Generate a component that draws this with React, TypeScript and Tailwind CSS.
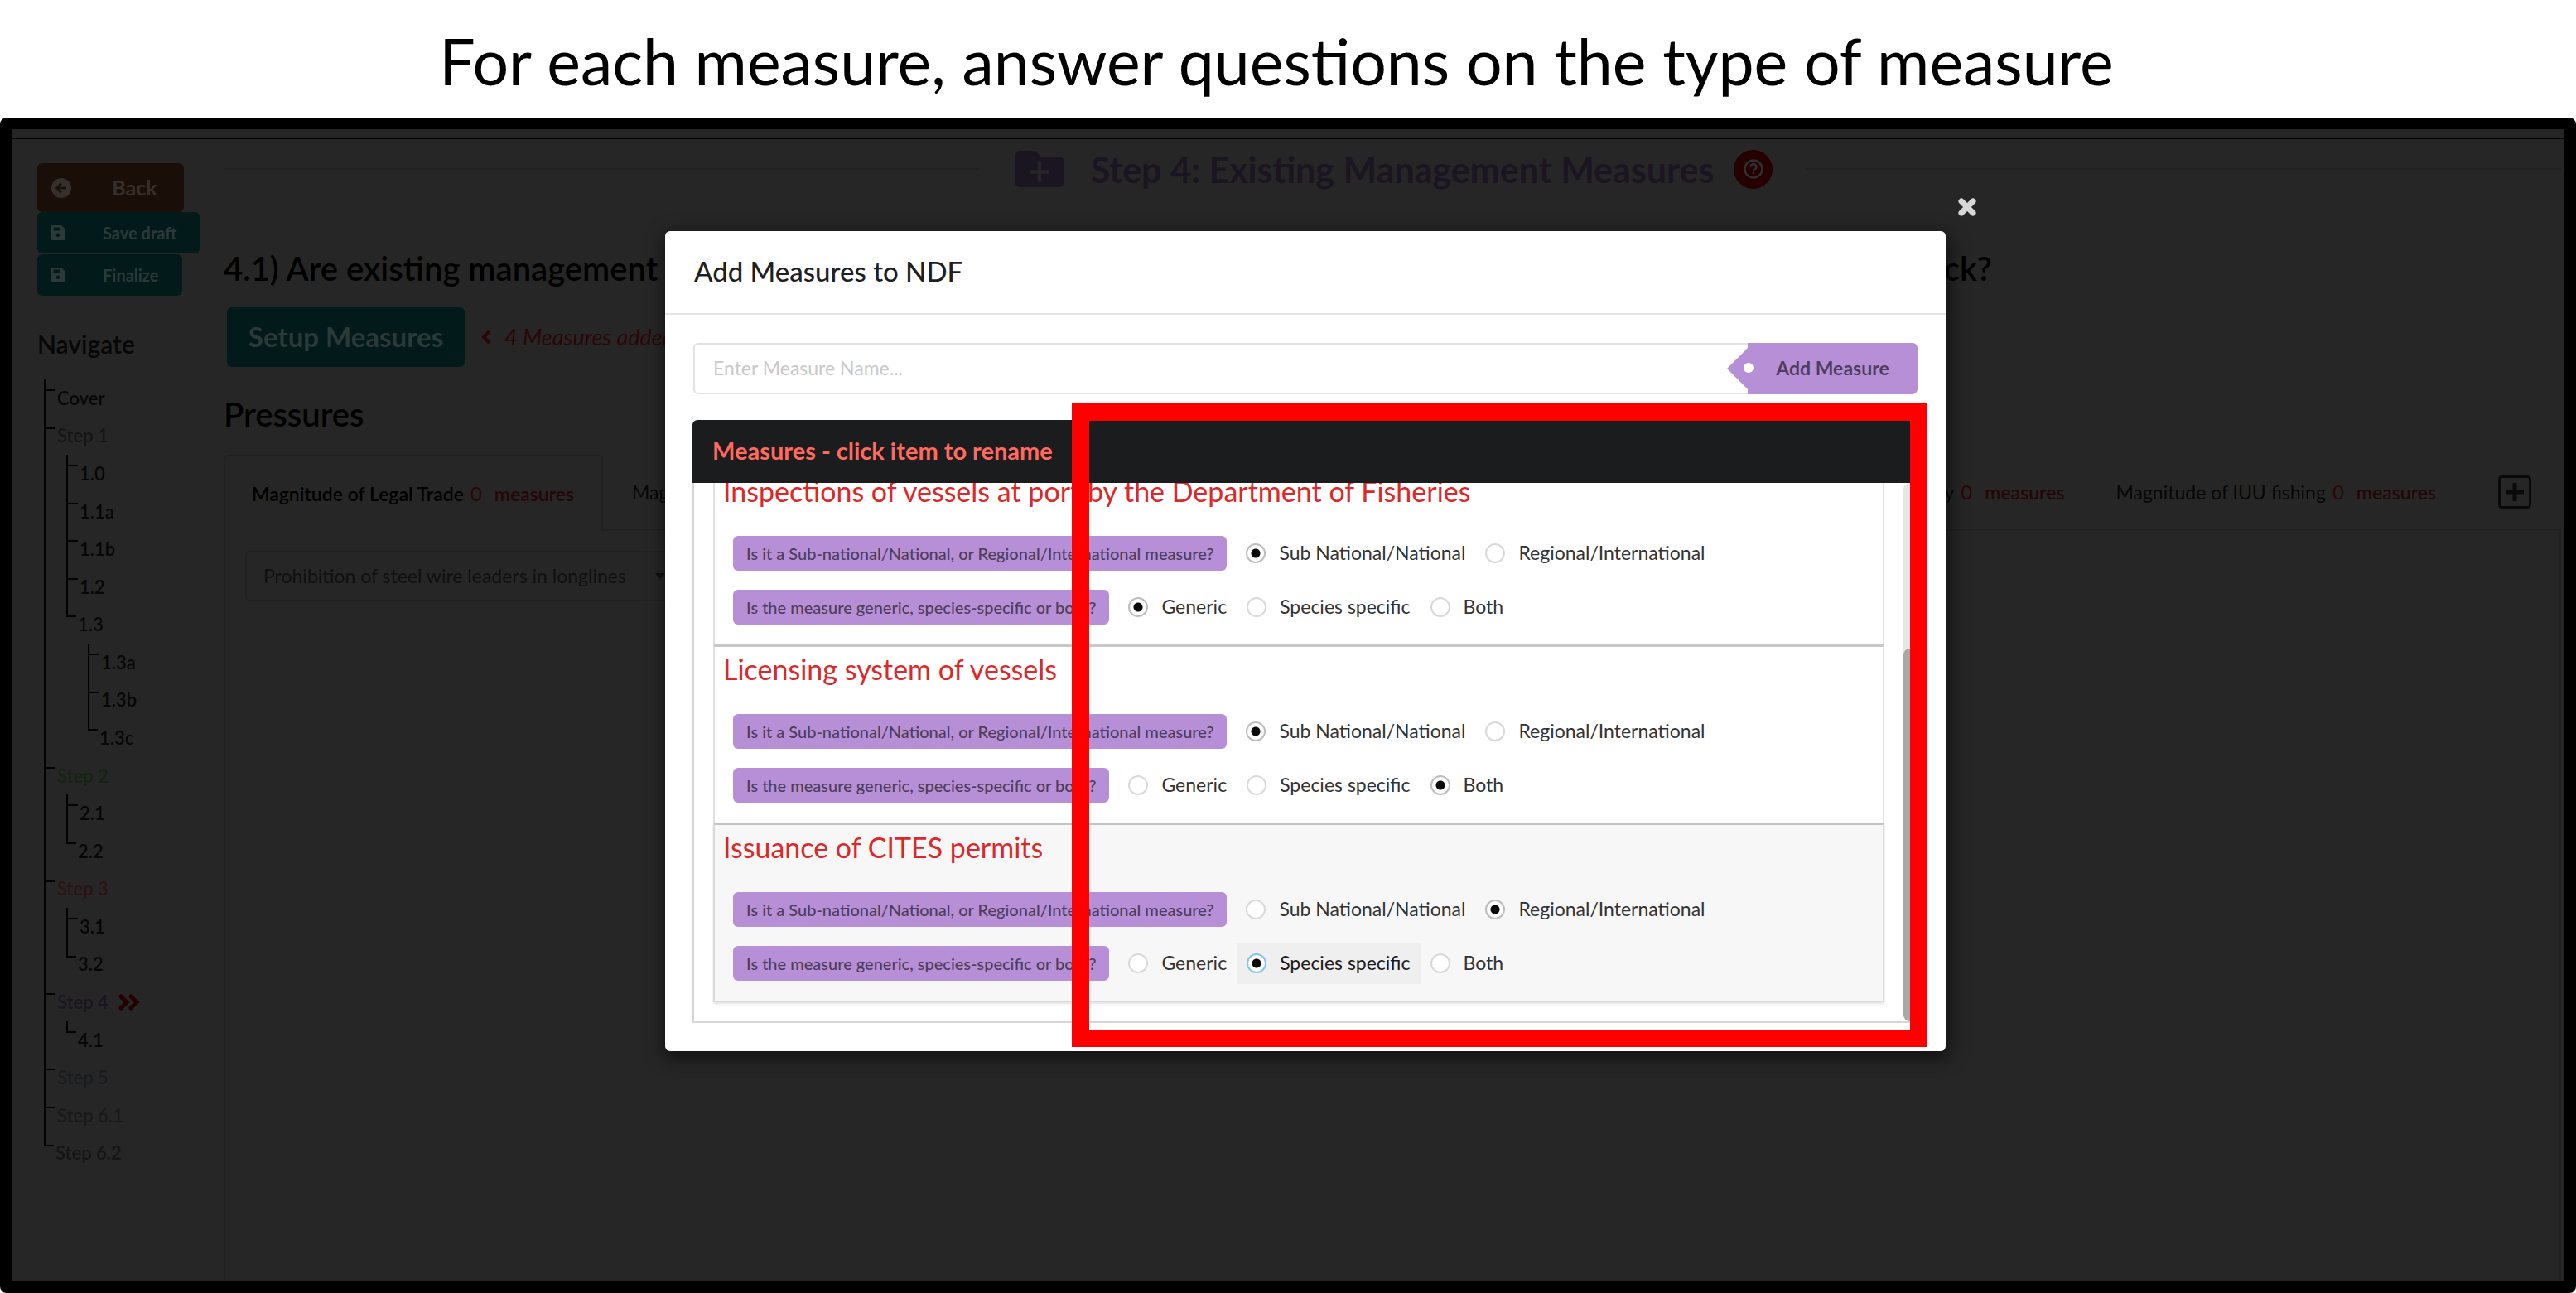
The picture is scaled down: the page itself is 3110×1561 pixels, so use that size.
import React from "react";

type TreeItem = {
  text: string;
  depth: 1 | 2 | 3;
  color?: string;
  last?: boolean;
  current?: boolean;
};

const tree: TreeItem[] = [
  { text: "Cover", depth: 1 },
  { text: "Step 1", depth: 1, color: "text-[#151515]" },
  { text: "1.0", depth: 2 },
  { text: "1.1a", depth: 2 },
  { text: "1.1b", depth: 2 },
  { text: "1.2", depth: 2 },
  { text: "1.3", depth: 2, last: true },
  { text: "1.3a", depth: 3 },
  { text: "1.3b", depth: 3 },
  { text: "1.3c", depth: 3, last: true },
  { text: "Step 2", depth: 1, color: "text-[#12240f]" },
  { text: "2.1", depth: 2 },
  { text: "2.2", depth: 2, last: true },
  { text: "Step 3", depth: 1, color: "text-[#2b1314]" },
  { text: "3.1", depth: 2 },
  { text: "3.2", depth: 2, last: true },
  { text: "Step 4", depth: 1, color: "text-[#1b1522]", current: true },
  { text: "4.1", depth: 2, last: true },
  { text: "Step 5", depth: 1, color: "text-[#191b1f]" },
  { text: "Step 6.1", depth: 1, color: "text-[#191919]" },
  { text: "Step 6.2", depth: 1, color: "text-[#151515]", last: true },
];

function Branch({ last }: { last?: boolean }) {
  return (
    <span className={last ? "flex w-3 shrink-0 flex-col self-stretch" : "flex w-[14px] shrink-0 flex-col self-stretch"}>
      <span className="h-[14px] border-b-2 border-l-2 border-black" />
      <span className={last ? "flex-1" : "flex-1 border-l-2 border-black"} />
    </span>
  );
}

function Tree() {
  return (
    <ul className="ml-2 flex h-[957px] flex-col text-[22px] font-semibold text-[#070707]">
      {tree.map((t) => (
        <li key={t.text} className="flex flex-1 items-center">
          {t.depth > 1 && <span className="w-[27px] shrink-0 self-stretch border-l-2 border-black" />}
          {t.depth > 2 && <span className="w-[26px] shrink-0" />}
          <Branch last={t.last} />
          <a href="#" className={t.color ? "ml-[2px] leading-none " + t.color : "ml-[2px] leading-none"}>
            {t.text}
          </a>
          {t.current && (
            <svg viewBox="0 0 26 20" className="ml-3 h-5 w-[26px]" fill="none" stroke="#240000" strokeWidth="5">
              <path d="M3 3l7 7-7 7M15 3l7 7-7 7" strokeLinecap="round" />
            </svg>
          )}
        </li>
      ))}
    </ul>
  );
}

function SaveIcon() {
  return (
    <svg viewBox="0 0 18 18" className="size-[18px]" fillRule="evenodd" fill="#2b3a39">
      <path d="M2 0h11l5 5v11a2 2 0 0 1-2 2H2a2 2 0 0 1-2-2V2a2 2 0 0 1 2-2zM3.500 2.500v4h8.500v-4zM9 9.500a2.300 2.300 0 1 0 .01 0z" />
    </svg>
  );
}

function Sidebar() {
  return (
    <aside className="flex w-[225px] shrink-0 flex-col items-start">
      <button className="flex h-[59px] w-[177px] items-center rounded-md bg-[#1a0f08] text-[25px] font-bold text-[#35302c]">
        <span className="flex w-[58px] justify-center">
          <svg viewBox="0 0 24 24" className="size-6">
            <circle cx="12" cy="12" r="12" fill="#35302c" />
            <path d="M18 12H7M12 6.500L6.500 12l5.500 5.500" fill="none" stroke="#1a0f08" strokeWidth="2.500" />
          </svg>
        </span>
        <span className="flex-1 text-center">Back</span>
      </button>
      <button className="flex h-[50px] w-[196px] items-center rounded-md bg-[#021a19] text-[20px] font-bold text-[#2b3a39]">
        <span className="flex w-[50px] justify-center"><SaveIcon /></span>
        <span className="ml-[29px]">Save draft</span>
      </button>
      <button className="mt-px flex h-[50px] w-[175px] items-center rounded-md bg-[#021a19] text-[20px] font-bold text-[#2b3a39]">
        <span className="flex w-[50px] justify-center"><SaveIcon /></span>
        <span className="ml-[29px]">Finalize</span>
      </button>
      <h3 className="mt-[37px] mb-[22px] text-[30px] leading-[42px] font-semibold text-[#070707]">Navigate</h3>
      <Tree />
    </aside>
  );
}

function TabLabel({ name, bold }: { name: string; bold?: boolean }) {
  return (
    <button className="flex items-baseline text-[23px] whitespace-nowrap">
      <span className={bold ? "font-semibold text-black" : "text-[#070707]"}>{name}</span>
      <span className="ml-2 text-[24px] text-[#2b0606]">0</span>
      <span className="ml-[15px] font-semibold text-[#240606]">measures</span>
    </button>
  );
}

function Content() {
  return (
    <main className="flex min-w-0 flex-1 flex-col">
      <div className="-mt-[17px] flex h-[48px] items-center">
        <span className="h-[2px] flex-1 bg-[#212121]" />
        <svg viewBox="0 0 58 44" className="mr-[33px] ml-11 h-11 w-[58px]">
          <path d="M5 0h19l6 7h23a5 5 0 0 1 5 5v27a5 5 0 0 1-5 5H5a5 5 0 0 1-5-5V5a5 5 0 0 1 5-5z" fill="#1b1522" />
          <path d="M29 13.500v24M17 25.500h24" stroke="#262626" strokeWidth="4.500" />
        </svg>
        <h1 className="text-[43px] leading-none font-bold text-[#1b1522]">Step 4: Existing Management Measures</h1>
        <button aria-label="Help" className="mr-10 ml-6 flex size-[47px] items-center justify-center rounded-full bg-[#260000]">
          <svg viewBox="0 0 24 24" className="size-6" fill="none" stroke="#303030" strokeWidth="2.500">
            <circle cx="12" cy="12" r="10.500" />
            <path d="M8.800 9.500a3.200 3.200 0 1 1 4.600 2.900c-1 .5-1.400 1-1.400 2M12 16v2" />
          </svg>
        </button>
        <span className="h-[2px] flex-1 bg-[#212121]" />
      </div>
      <h2 className="mt-[72px] flex w-[2135px] justify-between text-[40px] leading-[48px] font-semibold text-black">
        <span>4.1) Are existing management measures</span>
        <span>stock?</span>
      </h2>
      <div className="mt-[23px] ml-1 flex items-center">
        <button className="h-[72px] w-[287px] rounded-md bg-[#021a19] text-[33px] font-bold text-[#2b3a39]">Setup Measures</button>
        <svg viewBox="0 0 12 18" className="ml-5 h-[18px] w-3" fill="none" stroke="#2b0606" strokeWidth="4">
          <path d="M10 2L3 9l7 7" />
        </svg>
        <em className="ml-4 text-[27px] text-[#2b0606]">4 Measures added</em>
      </div>
      <h2 className="mt-[33px] text-[40px] leading-[48px] font-semibold text-black">Pressures</h2>
      <div className="mt-[25px] flex h-[92px] items-stretch">
        <div className="flex w-[458px] items-center rounded-t-md border-2 border-b-0 border-[#212121] pl-8">
          <TabLabel name="Magnitude of Legal Trade" bold />
        </div>
        <div className="flex flex-1 items-center border-b-2 border-[#212121] pl-[35px]">
          <TabLabel name="Magnitude of Illegal Trade" />
          <span className="flex-1" />
          <TabLabel name="Mortality" />
          <span className="w-[62px]" />
          <TabLabel name="Magnitude of IUU fishing" />
          <button aria-label="Add tab" className="mr-9 ml-[75px]">
            <svg viewBox="0 0 40 40" className="size-10" fill="none" stroke="#0a0a0a" strokeWidth="3">
              <rect x="1.500" y="1.500" width="37" height="37" rx="3" />
              <path d="M20 9v22M9 20h22" strokeWidth="5" />
            </svg>
          </button>
        </div>
      </div>
      <div className="flex-1 border-x-2 border-[#212121] px-6 pt-6">
        <div className="relative w-[533px]">
          <select aria-label="Measure" className="h-[61px] w-full appearance-none rounded-md border-2 border-[#212121] bg-transparent pl-5 text-[23px] text-[#101010]">
            <option>Prohibition of steel wire leaders in longlines</option>
          </select>
          <svg viewBox="0 0 12 7" className="absolute top-[27px] right-[26px] h-[7px] w-3">
            <path d="M0 0h12L6 7z" fill="#101010" />
          </svg>
        </div>
      </div>
    </main>
  );
}

function Option({ group, text, checked, active }: { group: string; text: string; checked: boolean; active?: boolean }) {
  const ring = active ? "border-[#85c6e0]" : checked ? "border-[#bdbdbd]" : "border-[#d9d9d9]";
  return (
    <label className={active ? "flex h-[50px] items-center gap-4 bg-[#efefef] px-3 text-[#1b1b1b]" : "flex h-[50px] items-center gap-4 px-3 text-[#333333]"}>
      <input
        type="radio"
        name={group}
        defaultChecked={checked}
        className={
          "size-6 shrink-0 appearance-none rounded-full border-2 bg-white bg-[radial-gradient(circle,#0a0a0a_5px,transparent_6px)] bg-center bg-no-repeat not-checked:bg-none " + ring
        }
      />
      <span className="whitespace-nowrap">{text}</span>
    </label>
  );
}

const scopes = ["Sub National/National", "Regional/International"];
const kinds = ["Generic", "Species specific", "Both"];

const measures = [
  { name: "Inspections of vessels at port by the Department of Fisheries", scope: 0, kind: 0 },
  { name: "Licensing system of vessels", scope: 0, kind: 2 },
  { name: "Issuance of CITES permits", scope: 1, kind: 1, active: true },
];

function Question({ text, options, value, group, active }: { text: string; options: string[]; value: number; group: string; active?: boolean }) {
  return (
    <div className="flex h-[65px] items-center text-[23px]">
      <span className="mr-[11px] flex h-[42px] items-center rounded-md bg-[#b68fd6] px-4 text-[20px] font-medium whitespace-nowrap text-[#4e3d5c]">
        {text}
      </span>
      {options.map((o, i) => (
        <Option key={o} group={group} text={o} checked={i === value} active={active && i === value} />
      ))}
    </div>
  );
}

function Modal() {
  return (
    <div role="dialog" aria-label="Add Measures to NDF" className="relative w-[1546px] shrink-0 rounded-md bg-white shadow-[2px_6px_20px_4px_rgba(0,0,0,0.5)]">
      <button aria-label="Close" className="absolute -top-[40px] -right-[37px]">
        <svg viewBox="0 0 22 22" className="size-[22px]" stroke="#d8d8d8" strokeWidth="7">
          <path d="M4 4l14 14M18 4L4 18" strokeLinecap="round" />
        </svg>
      </button>
      <h2 className="flex h-[101px] items-center border-b-2 border-[#e4e4e4] px-[35px] pb-[2px] text-[33px] font-medium text-[#1f1f1f]">
        Add Measures to NDF
      </h2>
      <div className="px-[33px] pt-[34px] pb-[34px]">
        <form className="flex h-[62px] px-px">
          <input
            aria-label="Measure name"
            placeholder="Enter Measure Name..."
            className="min-w-0 flex-1 rounded-l-md border-2 border-r-0 border-[#e2e2e2] px-[22px] pb-[2px] text-[23px] placeholder:text-[#c8c8c8]"
          />
          <button type="button" className="relative w-[205px] rounded-r-md bg-[#b68fd6] pb-[2px] text-[23px] font-bold text-[#4e3d5c]">
            <svg viewBox="0 0 34 52" className="absolute top-[5px] -left-[25px] h-[52px] w-[34px]">
              <path d="M26 0v52L0 26z" fill="#b68fd6" />
              <circle cx="26" cy="25" r="6" fill="#ffffff" />
            </svg>
            Add Measure
          </button>
        </form>
        <section className="mt-[31px]">
          <h3 className="flex h-[76px] items-center rounded-t-md bg-[#1b1c1d] px-[24px] pb-[2px] text-[29px] font-bold text-[#ff695e]">
            Measures - click item to rename
          </h3>
          <div className="flex h-[652px] overflow-hidden border-2 border-t-0 border-[#d6d6d6]">
            <div className="flex flex-1 flex-col justify-end px-[23px] pb-[23px]">
              {measures.map((m) => (
                <div
                  key={m.name}
                  className={
                    m.active
                      ? "h-[217px] shrink-0 border-2 border-t-[3px] border-[#dadada] border-t-[#c4c4c4] bg-[#f7f7f7] px-[10px] shadow-[0_2px_3px_rgba(0,0,0,0.12)]"
                      : "h-[215px] shrink-0 border-2 border-t-[3px] border-b-0 border-[#e0e0e0] border-t-[#c8c8c8] px-[10px]"
                  }
                >
                  <h4 className="mb-[16px] pt-px text-[34px] leading-[52px] text-[#db2828]">{m.name}</h4>
                  <div className="pl-3">
                    <Question text="Is it a Sub-national/National, or Regional/International measure?" options={scopes} value={m.scope} group={m.name + "scope"} />
                    <Question text="Is the measure generic, species-specific or both?" options={kinds} value={m.kind} group={m.name + "kind"} active={m.active} />
                  </div>
                </div>
              ))}
            </div>
            <div className="flex w-4 flex-col justify-end rounded-lg bg-[#e6e6e6]">
              <div className="h-[450px] rounded-lg bg-[#a8a8a8]" />
            </div>
          </div>
        </section>
      </div>
      <div className="pointer-events-none absolute top-[208px] right-[22px] bottom-[5px] left-[491px] border-[21px] border-[#ff0000]" />
    </div>
  );
}

export default function App() {
  return (
    <div className="flex min-h-screen flex-col bg-white font-['Lato',sans-serif]">
      <header className="flex h-[142px] items-center justify-center pt-1">
        <h1 className="mr-7 text-[77px] leading-none whitespace-nowrap text-black">
          For each measure, answer questions on the type of measure
        </h1>
      </header>
      <div className="relative flex flex-1 flex-col overflow-hidden rounded-lg border-[14px] border-black bg-[#262626]">
        <div className="h-[12px] border-b-2 border-black" />
        <div className="flex flex-1 pt-[29px] pr-1 pl-[31px]">
          <Sidebar />
          <Content />
        </div>
        <div className="absolute inset-0 flex items-start justify-center pt-[123px] pl-[42px]">
          <Modal />
        </div>
      </div>
    </div>
  );
}
